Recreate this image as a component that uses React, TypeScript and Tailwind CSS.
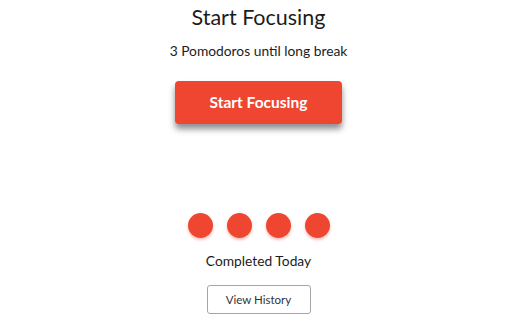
export default function App() {
  const completed = [0, 1, 2, 3]

  return (
    <div className="flex h-[320px] w-[512px] flex-col items-center bg-white pl-[5px] font-['Lato',sans-serif] text-[#1c1c1c]">
      <h1 className="mt-[4px] text-[21.5px] leading-[26px]">Start Focusing</h1>
      <p className="mt-[12px] text-[13.8px] leading-[18px]">3 Pomodoros until long break</p>

      <button className="mt-[21px] h-[43px] w-[167px] rounded-[4px] bg-[#ee4630] text-[15.5px] font-bold text-white shadow-[0_5px_6px_rgba(0,0,0,0.45)]">
        Start Focusing
      </button>

      <div className="mt-[89px] flex gap-[14px]">
        {completed.map((i) => (
          <span key={i} className="h-[25px] w-[25px] rounded-full bg-[#ee4630] shadow-[0_2px_3px_rgba(238,70,48,0.35)]" />
        ))}
      </div>

      <p className="mt-[13px] text-[13.8px] leading-[20px]">Completed Today</p>

      <button className="mt-[14px] h-[29px] w-[104px] rounded-[3px] border border-[#a6a6a6] bg-white text-[11.5px] text-[#333]">
        View History
      </button>
    </div>
  )
}
